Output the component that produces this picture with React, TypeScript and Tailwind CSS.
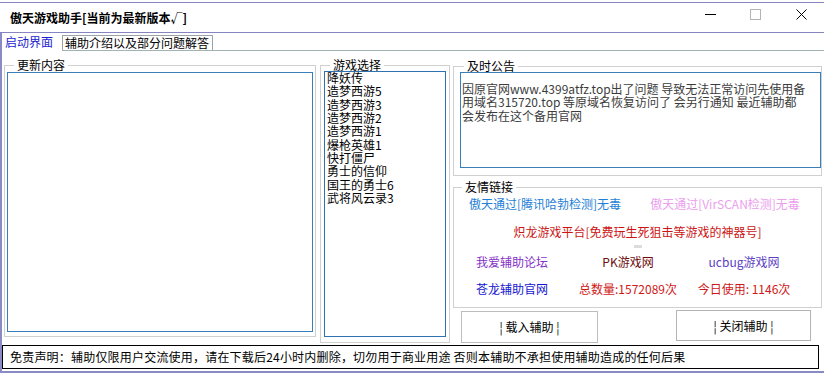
import React from "react";

const games = [
  "降妖传",
  "造梦西游5",
  "造梦西游3",
  "造梦西游2",
  "造梦西游1",
  "爆枪英雄1",
  "快打僵尸",
  "勇士的信仰",
  "国王的勇士6",
  "武将风云录3",
];

const Group = ({
  title,
  className,
  legendClass,
  children,
}: {
  title: string;
  className: string;
  legendClass: string;
  children?: React.ReactNode;
}) => (
  <fieldset className={`border border-[#d0d0d0] ${className}`}>
    <legend className={`px-[3px] leading-[14px] text-black ${legendClass}`}>
      {title}
    </legend>
    {children}
  </fieldset>
);

const App = () => {
  return (
    <div className="w-[824px] h-[375px] bg-white overflow-hidden flex flex-col text-[12px] text-black font-['Noto_Sans_CJK_SC',sans-serif]">
      {/* title bar */}
      <div className="mt-[2px] h-[31px] shrink-0 border-y border-[#8585c2] flex items-center">
        <span className="ml-[10px] font-bold">傲天游戏助手[当前为最新版本√]</span>
        <div className="ml-auto self-start mt-[6px] mr-[17px] flex items-start">
          <svg width="11" height="11" viewBox="0 0 11 11">
            <line x1="0" y1="5.5" x2="11" y2="5.5" stroke="#000" strokeWidth="1" />
          </svg>
          <svg width="11" height="11" viewBox="0 0 11 11" className="ml-[34px]">
            <rect x="0.5" y="0.5" width="10" height="10" fill="none" stroke="#b4b4b4" />
          </svg>
          <svg width="11" height="11" viewBox="0 0 11 11" className="ml-[35px]">
            <path d="M0.5 0.5 L10.5 10.5 M10.5 0.5 L0.5 10.5" stroke="#000" strokeWidth="1" />
          </svg>
        </div>
      </div>

      {/* window body */}
      <div className="h-[340px] shrink-0 border-l-2 border-b-2 border-[#8a8ac4] flex flex-col">
        {/* tabs */}
        <div className="h-[18px] flex shrink-0">
          <div className="w-[60px] pl-[3px] leading-[18px] text-[#1c1cd0]">启动界面</div>
          <div className="flex-1 border-b border-[#a3b2b2] flex items-end">
            <div className="w-[151px] h-[15px] border border-b-0 border-[#9aa4a4] pl-[2px] leading-[14px]">
              辅助介绍以及部分问题解答
            </div>
          </div>
        </div>

        {/* panels */}
        <div className="flex items-start shrink-0">
          <Group title="更新内容" className="ml-[2px] mt-[7px] w-[312px] h-[279px]" legendClass="ml-[9px]">
            <div className="mx-[2px] h-[260px] border border-[#3a7fba]" />
          </Group>

          <Group title="游戏选择" className="ml-[4px] mt-[7px] w-[130px] h-[285px]" legendClass="ml-[9px]">
            <div className="ml-[3px] -mt-px w-[122px] h-[266px] border border-[#2f72b2]">
              <ul className="pl-[2px] -mt-px leading-[13.33px]">
                {games.map((g) => (
                  <li key={g}>{g}</li>
                ))}
              </ul>
            </div>
          </Group>

          <div className="ml-[3px] w-[369px] flex flex-col">
            <Group title="及时公告" className="mt-[8px] h-[117px]" legendClass="ml-[10px]">
              <div className="ml-[6px] -mt-px w-[361px] h-[96px] border border-[#3a7fba] pt-[9px] pl-[1px] leading-[13.33px] text-[#3c3c3c] whitespace-nowrap">
                因原官网www.4399atfz.top出了问题 导致无法正常访问先使用备
                <br />
                用域名315720.top 等原域名恢复访问了 会另行通知 最近辅助都
                <br />
                会发布在这个备用官网
              </div>
            </Group>

            <Group title="友情链接" className="mt-[4px] h-[128px]" legendClass="ml-[8px]">
              <div className="h-[20px] leading-[20px] flex pl-[15px] gap-[29px] whitespace-nowrap">
                <span className="text-[#1f7fd6]">傲天通过[腾讯哈勃检测]无毒</span>
                <span className="text-[#eba0ee]">傲天通过[VirSCAN检测]无毒</span>
              </div>
              <div className="mt-[8px] h-[20px] leading-[20px] text-center text-[#cc1414]">
                炽龙游戏平台[免费玩生死狙击等游戏的神器号]
              </div>
              <div className="h-[10px] pt-[3px]">
                <div className="mx-auto w-[8px] h-[3px] bg-[#dcdcdc]" />
              </div>
              <div className="grid grid-cols-[116px_116px_116px] text-center whitespace-nowrap">
                <span className="h-[20px] leading-[20px] text-[#8530c8]">我爱辅助论坛</span>
                <span className="h-[20px] leading-[20px] text-[#6e0c0c]">PK游戏网</span>
                <span className="h-[20px] leading-[20px] text-[#5c40c4]">ucbug游戏网</span>
                <span className="mt-[7px] h-[20px] leading-[20px] text-[#1414d0]">苍龙辅助官网</span>
                <span className="mt-[7px] h-[20px] leading-[20px] text-[#d01818]">总数量:1572089次</span>
                <span className="mt-[7px] h-[20px] leading-[20px] text-[#d01818]">今日使用: 1146次</span>
              </div>
            </Group>

            <div className="mt-[3px] flex items-start">
              <button className="ml-[8px] w-[137px] h-[32px] border border-[#bdbdbd] bg-white text-center">
                ¦ 载入辅助 ¦
              </button>
              <button className="ml-[78px] -mt-px w-[135px] h-[31px] border border-[#b4b4b4] bg-white text-center">
                ¦ 关闭辅助 ¦
              </button>
            </div>
          </div>
        </div>

        {/* disclaimer bar */}
        <div className="mt-[2px] w-[817px] h-[24px] border border-black pl-[7px] leading-[22px] whitespace-nowrap tracking-[0.2px]">
          免责声明：辅助仅限用户交流使用，请在下载后24小时内删除，切勿用于商业用途 否则本辅助不承担使用辅助造成的任何后果
        </div>
      </div>
    </div>
  );
};

export default App;
